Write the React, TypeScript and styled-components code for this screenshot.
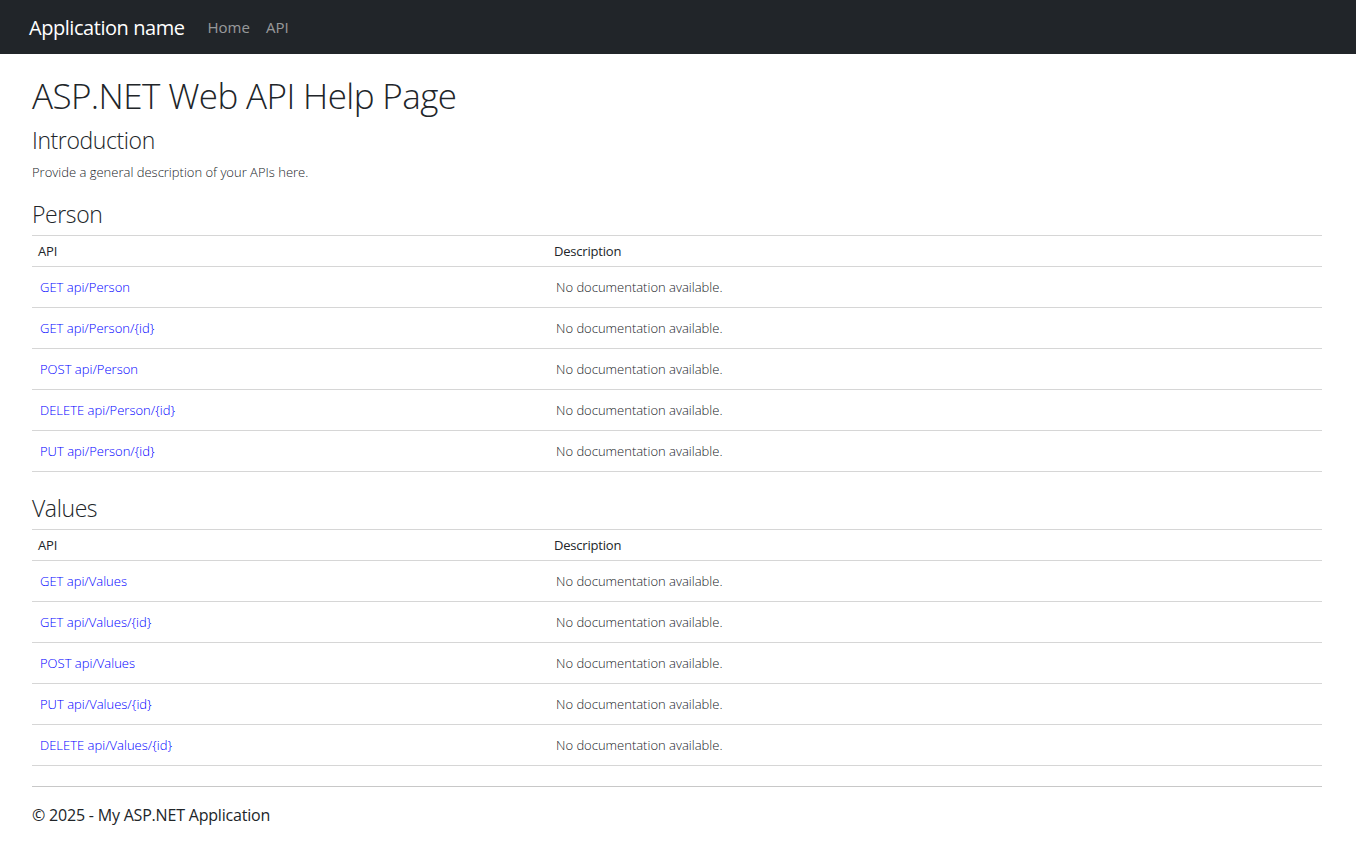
import React from "react";
import styled, { createGlobalStyle } from "styled-components";

const Global = createGlobalStyle`
  html, body { margin: 0; padding: 0; background: #fff; }
  body {
    font-family: "Open Sans", "Noto Sans", sans-serif;
    color: #212529;
  }
  * { box-sizing: border-box; }
`;

const Nav = styled.nav`
  height: 54px;
  background: #212529;
  display: flex;
  align-items: center;
  padding: 0 29px;
`;

const Brand = styled.a`
  color: #fff;
  font-size: 20px;
  text-decoration: none;
  margin-right: 23px;
  letter-spacing: -0.45px;
`;

const NavLink = styled.a`
  color: rgba(255, 255, 255, 0.55);
  font-size: 15px;
  text-decoration: none;
  margin-right: 16px;
`;

const Main = styled.main`
  padding: 0 34px 0 32px;
`;

const Title = styled.h1`
  font-weight: 300;
  font-size: 35px;
  line-height: 43px;
  margin: 20px 0 0;
  letter-spacing: -0.6px;
`;

const Heading = styled.h2<{ $top: number }>`
  font-weight: 300;
  font-size: 23px;
  line-height: 29px;
  margin: ${(p) => p.$top}px 0 0;
  letter-spacing: -0.4px;
`;

const Intro = styled.p`
  font-weight: 300;
  font-size: 13px;
  line-height: 18px;
  margin: 8px 0 0;
`;

const Table = styled.table`
  width: 100%;
  border-collapse: collapse;
  margin-top: 6px;
  border-top: 1px solid #d6d6d6;
`;

const HeadCell = styled.th<{ $w?: string }>`
  text-align: left;
  font-weight: 400;
  font-size: 13px;
  height: 31px;
  padding: 0 6px;
  border-bottom: 1px solid #d6d6d6;
  width: ${(p) => p.$w || "auto"};
  letter-spacing: -0.2px;
`;

const Cell = styled.td`
  font-weight: 300;
  font-size: 13px;
  height: 41px;
  padding: 0 8px;
  border-bottom: 1px solid #d6d6d6;
`;

const ApiLink = styled.a`
  color: #0000ff;
  text-decoration: none;
`;

const Rule = styled.hr`
  border: 0;
  border-top: 1px solid #c8c8c8;
  margin: 20px 0 0;
`;

const Footer = styled.footer`
  font-size: 16px;
  line-height: 24px;
  margin-top: 16px;
  letter-spacing: -0.2px;
`;

type Api = { method: string; path: string };

const person: Api[] = [
  { method: "GET", path: "api/Person" },
  { method: "GET", path: "api/Person/{id}" },
  { method: "POST", path: "api/Person" },
  { method: "DELETE", path: "api/Person/{id}" },
  { method: "PUT", path: "api/Person/{id}" },
];

const values: Api[] = [
  { method: "GET", path: "api/Values" },
  { method: "GET", path: "api/Values/{id}" },
  { method: "POST", path: "api/Values" },
  { method: "PUT", path: "api/Values/{id}" },
  { method: "DELETE", path: "api/Values/{id}" },
];

function ApiTable({ rows }: { rows: Api[] }) {
  return (
    <Table>
      <thead>
        <tr>
          <HeadCell $w="40%">API</HeadCell>
          <HeadCell>Description</HeadCell>
        </tr>
      </thead>
      <tbody>
        {rows.map((r, i) => (
          <tr key={i}>
            <Cell>
              <ApiLink href="#">
                {r.method} {r.path}
              </ApiLink>
            </Cell>
            <Cell>No documentation available.</Cell>
          </tr>
        ))}
      </tbody>
    </Table>
  );
}

export default function App() {
  return (
    <>
      <Global />
      <Nav>
        <Brand href="#">Application name</Brand>
        <NavLink href="#">Home</NavLink>
        <NavLink href="#">API</NavLink>
      </Nav>
      <Main>
        <Title>ASP.NET Web API Help Page</Title>
        <Heading $top={9}>Introduction</Heading>
        <Intro>Provide a general description of your APIs here.</Intro>
        <Heading $top={19}>Person</Heading>
        <ApiTable rows={person} />
        <Heading $top={22}>Values</Heading>
        <ApiTable rows={values} />
        <Rule />
        <Footer>© 2025 - My ASP.NET Application</Footer>
      </Main>
    </>
  );
}
